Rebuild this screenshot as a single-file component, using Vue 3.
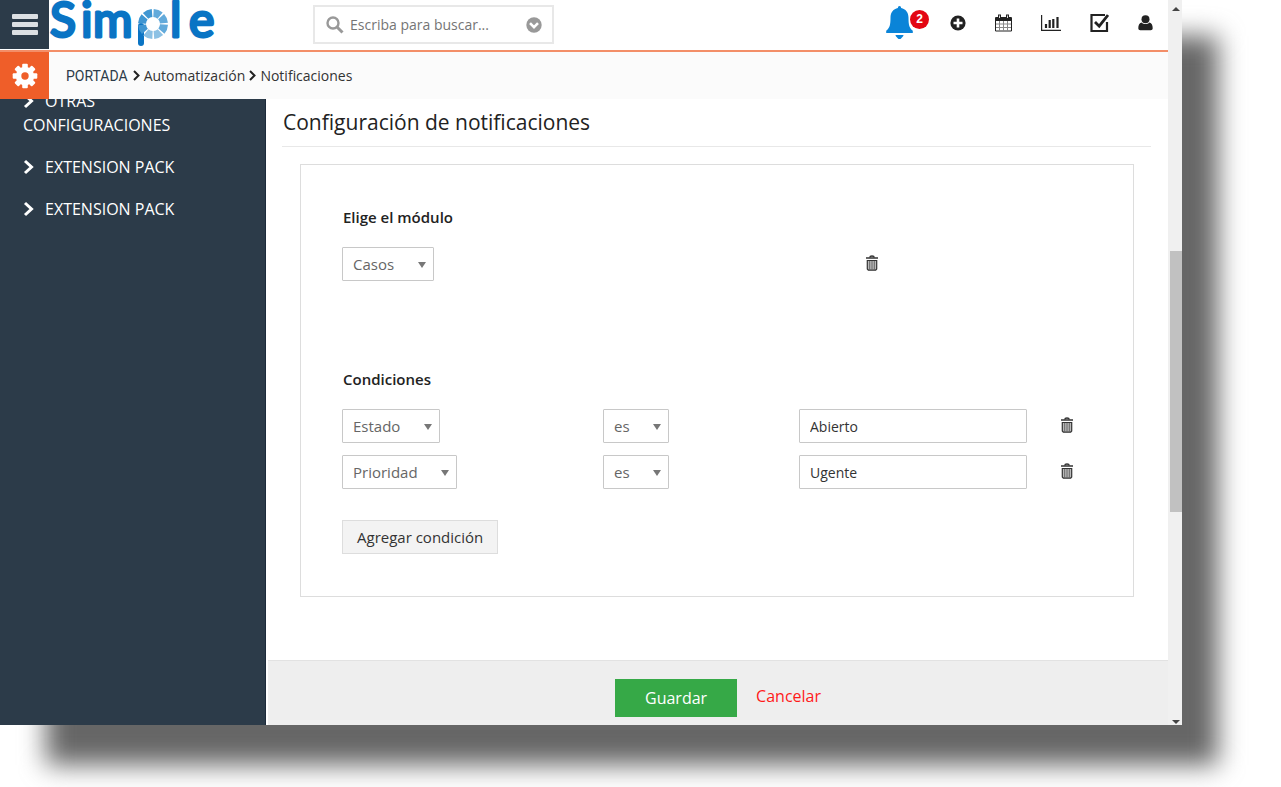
<script setup>
import { ref } from 'vue'

const sideItems = ['OTRAS CONFIGURACIONES', 'EXTENSION PACK', 'EXTENSION PACK']
const search = ref('')
const moduleName = ref('Casos')
const conditions = ref([
  { id: 1, field: 'Estado', operator: 'es', value: 'Abierto' },
  { id: 2, field: 'Prioridad', operator: 'es', value: 'Ugente' }
])
const wedges = Array.from({ length: 8 }, (_, i) => i * 45)
</script>

<template>
  <div class="window">
    <div class="app">
      <header class="topbar">
        <button class="menu" aria-label="Menú"><i></i><i></i><i></i></button>
        <a class="logo" href="#" aria-label="Simple">
          <svg width="172" height="50" viewBox="0 0 172 50">
            <g class="word">
              <text x="1" y="37">S</text>
              <text x="32" y="37">i</text>
              <text x="44" y="37">m</text>
              <text x="121" y="37">l</text>
              <text x="140" y="37">e</text>
            </g>
            <path d="M92 26V43" stroke="#0a74c4" stroke-width="6" stroke-linecap="round" />
            <g fill="none" stroke-width="8">
              <path
                v-for="(a, i) in wedges"
                :key="a"
                d="M104.500 13A11 11 0 0 1 111.100 15.600"
                :stroke="i > 4 ? '#3f96d2' : i > 2 ? '#8cc1e4' : '#62aadb'"
                :transform="`rotate(${a} 104 24)`"
              />
            </g>
          </svg>
        </a>
        <form class="search" @submit.prevent>
          <svg width="18" height="18" viewBox="0 0 18 18" fill="none" stroke="#999">
            <circle cx="7" cy="7" r="5.5" stroke-width="2.4" />
            <path d="M11 11l5.5 5.5" stroke-width="3" />
          </svg>
          <input v-model="search" type="text" placeholder="Escriba para buscar..." aria-label="Buscar" />
          <button type="button" aria-label="Opciones de búsqueda">
            <svg width="16" height="16" viewBox="0 0 16 16">
              <circle cx="8" cy="8" r="7.7" fill="#999" />
              <path d="M4 6.2l4 4 4-4" fill="none" stroke="#fff" stroke-width="2.6" />
            </svg>
          </button>
        </form>
        <nav class="tools" aria-label="Herramientas">
          <button class="bell" aria-label="Notificaciones, 2 nuevas">
            <svg width="27" height="34" viewBox="0 0 27 34" fill="#0a84d8">
              <path d="M13.5 0c1 0 1.6.8 1.6 2 4.500.9 7.400 4.500 7.400 9.500 0 7.500.8 10.500 4.300 13.200V27H.2v-2.300C3.700 22 4.500 19 4.500 11.500c0-5 2.900-8.600 7.400-9.500 0-1.200.6-2 1.600-2z" />
              <path d="M9.500 29h8c0 1.500-1.500 2-2.200 3.200-.8 1.200-2.800 1.200-3.600 0-.7-1.200-2.200-1.700-2.200-3.200z" />
            </svg>
            <span class="badge">2</span>
          </button>
          <button aria-label="Agregar">
            <svg width="16" height="16" viewBox="0 0 16 16">
              <circle cx="8" cy="8" r="7.600" fill="#222" />
              <path d="M8 3.500v9M3.500 8h9" stroke="#fff" stroke-width="2.600" />
            </svg>
          </button>
          <button aria-label="Calendario">
            <svg width="17" height="18" viewBox="0 0 17 18" fill="none" stroke="#222">
              <path d="M.5 3.500h16v13.500H.5zM.5 6.500h16" />
              <path d="M1 5h15" stroke-width="3" />
              <path d="M4.500 7v10M8.500 7v10M12.500 7v10M1 10h15M1 13.500h15" stroke="#888" />
              <path d="M4.500.5v4M12.500.5v4" stroke-width="3" />
              <path d="M4.500 1.500v2.500M12.500 1.500v2.500" stroke="#ddd" />
            </svg>
          </button>
          <button aria-label="Informes">
            <svg width="20" height="16" viewBox="0 0 20 16" fill="none" stroke="#222">
              <path d="M.6 0v15.400H20" stroke-width="1.200" />
              <path d="M5 13v-4M8.700 13V5M12.300 13V4M16.500 13V2" stroke-width="2.200" />
            </svg>
          </button>
          <button aria-label="Tareas">
            <svg width="19" height="20" viewBox="0 0 19 20" fill="none" stroke="#222">
              <path d="M17 9v9H1.500V2H15" stroke-width="2.200" />
              <path d="M5 9l4.200 4.200L18 2" stroke-width="2.800" />
            </svg>
          </button>
          <button aria-label="Usuario">
            <svg width="15" height="16" viewBox="0 0 15 16" fill="#222">
              <circle cx="7.500" cy="4.200" r="4" />
              <path d="M3.500 7.500c2.300 2 5.700 2 8 0 2.300.5 3.200 3 3.200 5.800 0 1.200-.8 1.900-2 1.900H2.300c-1.200 0-2-.7-2-1.900 0-2.800.9-5.300 3.200-5.800z" />
            </svg>
          </button>
        </nav>
      </header>

      <div class="crumbbar">
        <button class="gear" aria-label="Configuración">
          <svg width="26" height="26" viewBox="-13 -13 26 26">
            <g fill="#fff">
              <rect v-for="a in [0, 45, 90, 135]" :key="a" x="-2.800" y="-12.300" width="5.600" height="24.600" rx="1" :transform="`rotate(${a})`" />
              <circle r="9.200" />
            </g>
            <circle r="3.700" fill="#ef5e29" />
          </svg>
        </button>
        <nav class="crumbs" aria-label="Ruta">
          <a class="home" href="#">PORTADA</a>
          <svg width="7" height="11" viewBox="0 0 7 11"><path d="M1 1l4.500 4.500L1 10" /></svg>
          <a href="#">Automatización</a>
          <svg width="7" height="11" viewBox="0 0 7 11"><path d="M1 1l4.500 4.500L1 10" /></svg>
          <a href="#">Notificaciones</a>
        </nav>
      </div>

      <div class="body">
        <aside class="sidebar">
          <ul>
            <li v-for="(item, i) in sideItems" :key="i">
              <a href="#">
                <svg width="12" height="16" viewBox="0 0 12 16"><path d="M2 2l6.500 6L2 14" /></svg>{{ item }}
              </a>
            </li>
          </ul>
        </aside>

        <main class="main">
          <h1>Configuración de notificaciones</h1>
          <section class="card">
            <label class="heading" for="module">Elige el módulo</label>
            <div class="module-row">
              <div>
                <span class="select">
                  <select id="module" v-model="moduleName"><option>Casos</option></select>
                  <svg width="8" height="6" viewBox="0 0 8 6"><path d="M0 0h8L4 6z" /></svg>
                </span>
              </div>
              <button class="trash" aria-label="Eliminar módulo">
                <svg width="12" height="16" viewBox="0 0 12 16" fill="none" stroke="#333">
                  <path d="M0 3h12" stroke-width="1.500" />
                  <path d="M3.800 2.500C4 .5 8 .5 8.200 2.500" stroke-width="1.600" />
                  <path d="M1.300 5.500h9.400v8.500l-1 1.200H2.300l-1-1.200z" fill="#bbb" stroke-width="1.200" />
                  <path d="M3.700 6v9M6 6v9M8.300 6v9" stroke="#666" />
                </svg>
              </button>
            </div>

            <h2 class="heading conditions-title">Condiciones</h2>
            <div class="conditions">
              <div v-for="c in conditions" :key="c.id" class="condition">
                <div>
                  <span class="select">
                    <select v-model="c.field" aria-label="Campo"><option>{{ c.field }}</option></select>
                    <svg width="8" height="6" viewBox="0 0 8 6"><path d="M0 0h8L4 6z" /></svg>
                  </span>
                </div>
                <div>
                  <span class="select">
                    <select v-model="c.operator" aria-label="Operador"><option>es</option></select>
                    <svg width="8" height="6" viewBox="0 0 8 6"><path d="M0 0h8L4 6z" /></svg>
                  </span>
                </div>
                <input v-model="c.value" class="value" type="text" aria-label="Valor" />
                <button class="trash" aria-label="Eliminar condición">
                  <svg width="12" height="16" viewBox="0 0 12 16" fill="none" stroke="#333">
                    <path d="M0 3h12" stroke-width="1.500" />
                    <path d="M3.800 2.500C4 .5 8 .5 8.200 2.500" stroke-width="1.600" />
                    <path d="M1.300 5.500h9.400v8.500l-1 1.200H2.300l-1-1.200z" fill="#bbb" stroke-width="1.200" />
                    <path d="M3.700 6v9M6 6v9M8.300 6v9" stroke="#666" />
                  </svg>
                </button>
              </div>
            </div>
            <button class="add">Agregar condición</button>
          </section>
          <footer class="actions">
            <button class="save">Guardar</button>
            <a class="cancel" href="#">Cancelar</a>
          </footer>
        </main>
      </div>
    </div>

    <div class="scrollbar" aria-hidden="true">
      <svg width="8" height="4" viewBox="0 0 8 4"><path d="M0 4h8L4 0z" /></svg>
      <div class="track"><div class="thumb"></div></div>
      <svg width="8" height="4" viewBox="0 0 8 4"><path d="M0 0h8L4 4z" /></svg>
    </div>
  </div>
</template>

<style>
html,
body {
  margin: 0;
  background: #fff;
}
body {
  overflow: hidden;
}
</style>

<style scoped>
* {
  box-sizing: border-box;
}
button,
input,
select {
  font: inherit;
  color: inherit;
  margin: 0;
  padding: 0;
  border: 0;
  background: none;
  outline: 0;
}
button {
  cursor: pointer;
}
a {
  color: inherit;
  text-decoration: none;
}
svg {
  display: block;
  flex: none;
}
.window {
  position: relative;
  z-index: 0;
  display: flex;
  margin: 0 99px 62px 0;
  min-height: calc(100vh - 62px);
  font-family: 'Open Sans', 'Noto Sans', sans-serif;
  font-size: 15px;
  line-height: 24px;
  color: #222;
}
.window::before {
  content: '';
  position: absolute;
  z-index: -1;
  inset: 36px -36px -40px 46px;
  background: #666;
  filter: blur(13px);
}
.app {
  flex: 1;
  min-width: 0;
  display: flex;
  flex-direction: column;
  background: #fff;
}
.topbar {
  display: flex;
  height: 52px;
  border-bottom: 2px solid #f38e68;
}
.menu {
  width: 49px;
  height: 49px;
  background: #2c3b49;
  display: flex;
  flex-direction: column;
  align-items: center;
  justify-content: center;
  gap: 3px;
}
.menu i {
  width: 26px;
  height: 5px;
  border-radius: 1px;
  background: #dcdfe3;
}
.logo {
  width: 172px;
}
.logo svg {
  overflow: visible;
}
.word {
  font: 400 48px Lato, sans-serif;
  fill: #0a74c4;
  stroke: #0a74c4;
  stroke-width: 3px;
  stroke-linejoin: round;
}
.search {
  display: flex;
  align-items: center;
  width: 241px;
  height: 39px;
  margin: 5px 0 0 92px;
  padding: 0 10px 0 11px;
  border: 2px solid #e8e8e8;
}
.search input {
  flex: 1;
  min-width: 0;
  margin-left: 6px;
  font-size: 14px;
}
.search input::placeholder {
  color: #757575;
  opacity: 1;
}
.tools {
  margin-left: auto;
  padding-right: 15px;
  display: flex;
  align-items: center;
  gap: 29px;
  height: 46px;
}
.bell {
  position: relative;
  width: 35px;
}
.badge {
  position: absolute;
  left: 24px;
  top: 4px;
  width: 19px;
  height: 19px;
  border-radius: 50%;
  background: #e30613;
  color: #fff;
  font: 700 12px/19px 'Liberation Sans', sans-serif;
  text-align: center;
}
.crumbbar {
  display: flex;
  height: 47px;
  background: #fbfbfb;
}
.gear {
  width: 49px;
  background: #ef5e29;
  display: flex;
  align-items: center;
  justify-content: center;
}
.crumbs {
  display: flex;
  align-items: center;
  gap: 4px;
  padding-left: 17px;
  font-size: 14px;
  color: #333;
}
.crumbs svg {
  fill: none;
  stroke: #222;
  stroke-width: 2px;
}
.home {
  margin-right: 1px;
  font: 400 14px/24px Roboto, sans-serif;
  color: #2c3b49;
}
.body {
  flex: 1;
  display: flex;
}
.sidebar {
  width: 266px;
  overflow: hidden;
  background: #2c3b49;
  border-right: 1px solid #1c2a3a;
  color: #fff;
  font-size: 16px;
}
.sidebar ul {
  list-style: none;
  margin: -10px 0 0;
  padding: 0 60px 0 23px;
  display: flex;
  flex-direction: column;
  gap: 18px;
}
.sidebar svg {
  display: inline-block;
  vertical-align: -2px;
  margin-right: 10px;
  fill: none;
  stroke: #fff;
  stroke-width: 3px;
}
.main {
  flex: 1;
  min-width: 0;
  display: flex;
  flex-direction: column;
}
h1 {
  margin: 0 17px 0 16px;
  padding: 8px 0 9px 1px;
  border-bottom: 1px solid #e8e8e8;
  font-size: 21px;
  line-height: 30px;
  font-weight: 400;
}
.card {
  margin: 17px 34px 63px;
  padding: 40px 41px 42px;
  border: 1px solid #ddd;
}
.heading {
  display: block;
  margin: 0 0 18px;
  padding-left: 1px;
  font-size: 15px;
  line-height: 24px;
  font-weight: 600;
}
.module-row {
  display: grid;
  grid-template-columns: 524fr 226fr;
}
.conditions-title {
  margin-top: 86px;
}
.conditions {
  display: grid;
  gap: 12px;
}
.condition {
  display: grid;
  grid-template-columns: 261fr 196fr 262fr 31fr;
}
.select {
  position: relative;
  display: inline-block;
  vertical-align: top;
}
.select select {
  display: block;
  appearance: none;
  height: 34px;
  padding: 0 38px 0 10px;
  border: 1px solid #c8c8c8;
  border-radius: 1px;
  color: #666;
}
.select svg {
  position: absolute;
  right: 8px;
  top: 15px;
  fill: #777;
  pointer-events: none;
}
.value {
  width: 87%;
  height: 34px;
  padding: 0 10px;
  border: 1px solid #c8c8c8;
  border-radius: 1px;
  font-size: 14px;
  color: #333;
}
.trash {
  width: 12px;
  height: 32px;
}
.add {
  margin-top: 31px;
  height: 34px;
  padding: 0 14px;
  border: 1px solid #ddd;
  background: #f3f3f3;
  color: #333;
}
.actions {
  margin: auto 0 0 2px;
  height: 65px;
  border-top: 1px solid #e2e2e2;
  background: #eee;
  display: flex;
  justify-content: center;
  gap: 19px;
  padding-top: 18px;
  font-size: 16px;
}
.save {
  height: 38px;
  padding: 0 30px;
  background: #36a947;
  color: #fff;
}
.cancel {
  line-height: 34px;
  color: #ff1a1a;
}
.scrollbar {
  width: 14px;
  padding: 7px 0 1px 2px;
  background: #f0f0f0;
  display: flex;
  flex-direction: column;
  align-items: center;
}
.scrollbar svg {
  fill: #444;
}
.track {
  flex: 1;
  width: 100%;
  display: grid;
  grid-template-rows: 240fr 261fr 208fr;
}
.thumb {
  grid-row: 2;
  background: #c1c1c1;
}
</style>
